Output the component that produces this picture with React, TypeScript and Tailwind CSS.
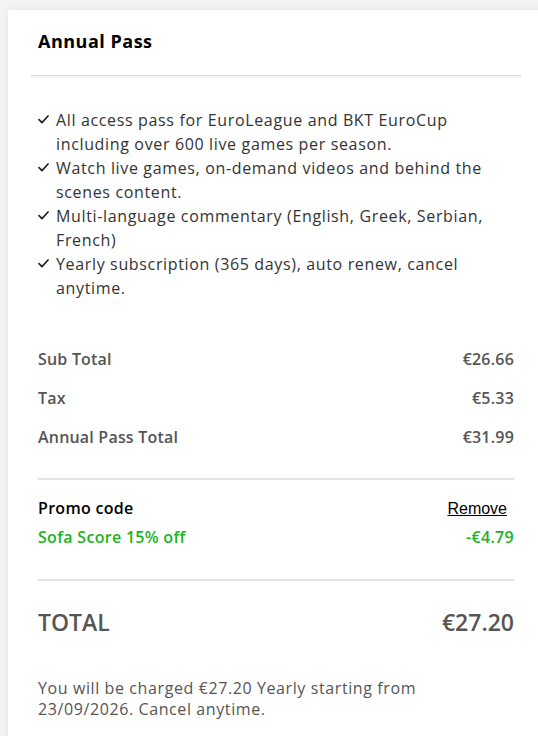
import React from "react";

const Check = () => (
  <svg width="11" height="9" viewBox="0 0 11 9" className="shrink-0 mt-[7px]" aria-hidden>
    <path d="M1 4.6 L4 7.6 L10 1" fill="none" stroke="#222" strokeWidth="1.7" strokeLinecap="round" strokeLinejoin="round" />
  </svg>
);

const items: React.ReactNode[] = [
  <>All access pass for EuroLeague and BKT EuroCup<br />including over 600 live games per season.</>,
  <>Watch live games, on-demand videos and behind the<br />scenes content.</>,
  <>Multi-language commentary (English, Greek, Serbian,<br />French)</>,
  <>Yearly subscription (365 days), auto renew, cancel<br />anytime.</>,
];

export default function App() {
  return (
    <div
      className="w-[538px] h-[736px] overflow-hidden bg-[#f4f4f4] pl-[8px] pt-[10px]"
      style={{ fontFamily: '"Open Sans", "Noto Sans", sans-serif' }}
    >
      <div className="w-[536px] h-[740px] bg-white shadow-[0_0_8px_rgba(0,0,0,0.08)] pt-[17px]">
        <div className="px-[30px]">
          <h1 className="text-[18px] leading-[28px] font-bold text-black tracking-[0.5px]">Annual Pass</h1>
        </div>
        <div className="mx-[23px] mt-[20px] h-px bg-[#d9d9d9] shadow-[0_1px_2px_rgba(0,0,0,0.12)]" />
        <div className="px-[30px]">
          <ul className="mt-[32px] flex flex-col text-[16px] leading-[24px] text-[#333] tracking-[0.65px]">
            {items.map((t, i) => (
              <li key={i} className="flex gap-[7px]">
                <Check />
                <span>{t}</span>
              </li>
            ))}
          </ul>
          <div className="mt-[47px] flex flex-col gap-[15px] text-[16px] leading-[24px] font-semibold text-[#555] tracking-[0.2px]">
            <div className="flex justify-between"><span>Sub Total</span><span>€26.66</span></div>
            <div className="flex justify-between"><span>Tax</span><span>€5.33</span></div>
            <div className="flex justify-between"><span>Annual Pass Total</span><span>€31.99</span></div>
          </div>
          <div className="mt-[29px] h-[2px] bg-[#e3e3e3]" />
          <div className="mt-[14px] text-[16px] leading-[29px] font-semibold tracking-[0.3px]">
            <div className="flex justify-between items-center">
              <span className="text-black">Promo code</span>
              <button
                className="text-black font-normal underline mr-[7px] cursor-pointer tracking-normal"
                style={{ fontFamily: '"Liberation Sans", Arial, sans-serif' }}
              >
                Remove
              </button>
            </div>
            <div className="flex justify-between text-[#1cb41c]">
              <span>Sofa Score 15% off</span>
              <span>-€4.79</span>
            </div>
          </div>
          <div className="mt-[27px] h-[2px] bg-[#e3e3e3]" />
          <div className="mt-[25px] flex justify-between text-[23px] leading-[32px] font-semibold text-[#555]">
            <span>TOTAL</span>
            <span>€27.20</span>
          </div>
          <p className="mt-[40px] text-[16px] leading-[21px] text-[#555] tracking-[0.6px]">
            You will be charged €27.20 Yearly starting from<br />23/09/2026. Cancel anytime.
          </p>
        </div>
      </div>
    </div>
  );
}
